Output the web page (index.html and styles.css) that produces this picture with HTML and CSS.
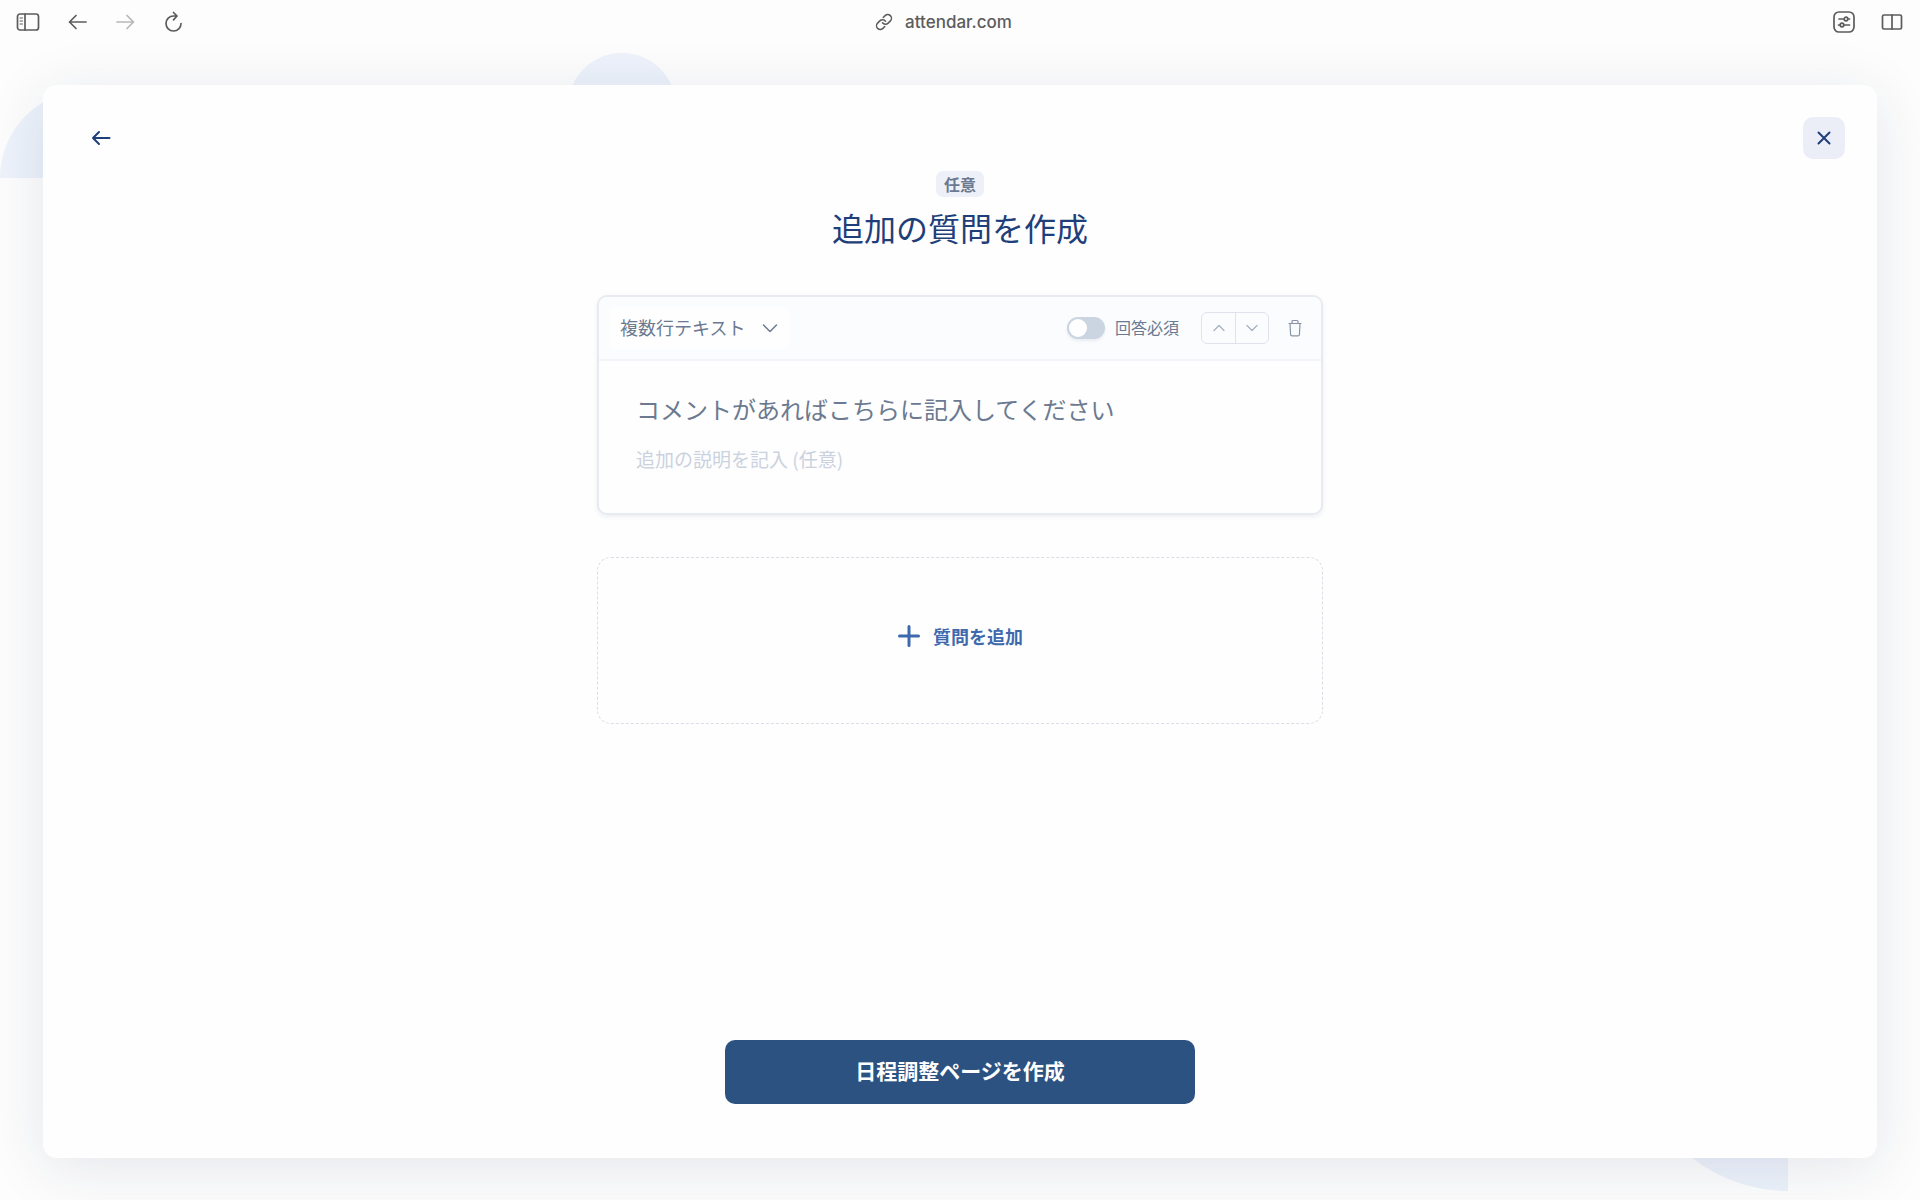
FILE: index.html
```html
<!DOCTYPE html>
<html lang="ja">
<head>
  <meta charset="UTF-8">
  <title>追加の質問を作成</title>
  <link rel="stylesheet" href="styles.css">
</head>
<body>
  <header class="toolbar">
    <div class="tools">
      <button class="tool" aria-label="サイドバー">
        <svg width="24" height="20" viewBox="0 0 24 20"><rect x="1.5" y="2" width="21" height="16" rx="2.5"/><path d="M9 2v16"/><path class="thin" d="M4 6h2.500M4 9h2.500M4 12h2.500"/></svg>
      </button>
      <button class="tool" aria-label="戻る">
        <svg width="20" height="20" viewBox="0 0 20 20"><path d="M18 10H1.500M8 3.500L1.500 10 8 16.500"/></svg>
      </button>
      <button class="tool" aria-label="進む" disabled>
        <svg width="20" height="20" viewBox="0 0 20 20"><path d="M1 10h16.500M11 3.500l6.500 6.500-6.500 6.500"/></svg>
      </button>
      <button class="tool" aria-label="再読み込み">
        <svg width="20" height="22" viewBox="0 0 20 22"><path d="M17 12.500a7.500 7.500 0 1 1-7.500-7.500H13M9.500 1.500L13 5 9.500 8.800"/></svg>
      </button>
    </div>
    <div class="address">
      <svg width="18" height="18" viewBox="0 0 24 24"><path d="M10 13a5 5 0 0 0 7.540.540l3-3a5 5 0 0 0-7.070-7.070l-2.500 2.500"/><path d="M14 11a5 5 0 0 0-7.540-.540l-3 3a5 5 0 0 0 7.070 7.070l2.500-2.500"/></svg>
      <span>attendar.com</span>
    </div>
    <div class="tools tools-end">
      <button class="tool" aria-label="ページ設定">
        <svg width="22" height="22" viewBox="0 0 22 22"><rect x="1" y="1" width="20" height="20" rx="5"/><path d="M6 8h5M15 8h1.500M5.500 14H7M11 14h5.500"/><circle cx="13" cy="8" r="1.800"/><circle cx="9" cy="14" r="1.800"/></svg>
      </button>
      <button class="tool" aria-label="分割表示">
        <svg width="22" height="20" viewBox="0 0 22 20"><rect x="1.500" y="3" width="19" height="14" rx="1.500"/><path d="M11 3v14"/></svg>
      </button>
    </div>
  </header>

  <main class="stage">
    <div class="shape shape-left"></div>
    <div class="shape shape-top"></div>
    <div class="shape shape-bottom"></div>

    <section class="modal">
      <div class="modal-nav">
        <button class="icon-button" aria-label="前の画面">
          <svg width="20" height="20" viewBox="0 0 20 20"><path d="M18.500 10H2M8 4l-6 6 6 6"/></svg>
        </button>
        <button class="icon-button close" aria-label="閉じる">
          <svg width="20" height="20" viewBox="0 0 20 20"><path d="M4.500 4.500l11 11M15.500 4.500l-11 11"/></svg>
        </button>
      </div>

      <div class="content">
        <span class="badge">任意</span>
        <h1>追加の質問を作成</h1>

        <article class="question">
          <div class="question-bar">
            <div class="type">
              <select aria-label="回答形式">
                <option>複数行テキスト</option>
                <option>一行テキスト</option>
              </select>
              <svg width="16" height="16" viewBox="0 0 16 16"><path d="M1.500 5L8 11.500 14.500 5"/></svg>
            </div>
            <label class="required"><input type="checkbox" role="switch"><span>回答必須</span></label>
            <div class="order">
              <button aria-label="上へ移動"><svg width="12" height="12" viewBox="0 0 12 12"><path d="M1 8.500l5-5 5 5"/></svg></button>
              <button aria-label="下へ移動"><svg width="12" height="12" viewBox="0 0 12 12"><path d="M1 3.500l5 5 5-5"/></svg></button>
            </div>
            <button class="delete" aria-label="質問を削除">
              <svg width="16" height="18" viewBox="0 0 16 18"><path d="M2 4.500h12M5 4.500V2.500a1 1 0 0 1 1-1h4a1 1 0 0 1 1 1v2M3 4.500l.6 11a1.500 1.500 0 0 0 1.500 1.400h5.800a1.500 1.500 0 0 0 1.500-1.400l.6-11"/></svg>
            </button>
          </div>
          <div class="question-body">
            <input class="title" type="text" aria-label="質問" value="コメントがあればこちらに記入してください">
            <input class="note" type="text" aria-label="追加の説明" placeholder="追加の説明を記入 (任意)">
          </div>
        </article>

        <button class="add">
          <svg width="24" height="24" viewBox="0 0 24 24"><path d="M12 2.500v19M2.500 12h19"/></svg>
          質問を追加
        </button>
      </div>

      <button class="submit">日程調整ページを作成</button>
    </section>
  </main>
</body>
</html>
```
FILE: styles.css
```css
* {
  box-sizing: border-box;
}

body {
  display: flex;
  flex-direction: column;
  min-height: 100vh;
  margin: 0;
  background: #fdfdfd;
  color: #6b7a90;
  font-family: "Noto Sans CJK JP", sans-serif;
}

button,
input,
select {
  margin: 0;
  padding: 0;
  border: none;
  background: none;
  color: inherit;
  font: inherit;
}

button {
  display: flex;
  align-items: center;
  justify-content: center;
  cursor: pointer;
}

svg {
  display: block;
  fill: none;
  stroke: currentColor;
  stroke-width: 1.5;
  stroke-linecap: round;
  stroke-linejoin: round;
}

/* Browser bar */
.toolbar {
  display: grid;
  grid-template-columns: 1fr auto 1fr;
  align-items: center;
  height: 43px;
  padding: 0 17px 0 16px;
  background: #fdfdfd;
  color: #5c5c5c;
}

.tools {
  display: flex;
  align-items: center;
  gap: 28px;
}

.tool svg {
  stroke-width: 1.7;
}

.tools-end {
  justify-content: flex-end;
  gap: 26px;
}

.tool:disabled {
  color: #b8b8b8;
}

.tool .thin {
  stroke-width: 1;
}

.address {
  display: flex;
  align-items: center;
  gap: 12px;
  padding-right: 32px;
  font: 500 17px Inter, sans-serif;
}

.address svg {
  stroke-width: 2;
}

/* Background and dialog */
.stage {
  position: relative;
  display: flex;
  flex: 1;
  padding: 42px 43px;
  overflow: hidden;
}

.shape {
  position: absolute;
  background: #edf2fb;
}

.shape-left {
  top: 47px;
  left: 0;
  width: 88px;
  height: 88px;
  border-radius: 88px 0 0 0;
}

.shape-top {
  top: 10px;
  left: 568px;
  width: 108px;
  height: 108px;
  border-radius: 50%;
}

.shape-bottom {
  right: 132px;
  bottom: 9px;
  width: 155px;
  height: 155px;
  border-radius: 0 0 0 155px;
}

.modal {
  position: relative;
  display: flex;
  flex: 1;
  flex-direction: column;
  align-items: center;
  padding-bottom: 54px;
  border-radius: 14px;
  background: #fefefe;
  box-shadow: 0 10px 60px rgba(30, 50, 80, 0.11);
}

.modal-nav {
  display: flex;
  justify-content: space-between;
  width: 100%;
  padding: 32px 32px 0 37px;
}

.icon-button {
  width: 42px;
  height: 42px;
  border-radius: 10px;
  color: #1e3f7a;
}

.icon-button svg {
  stroke-width: 2;
}

.close {
  background: #ebeef7;
}

.content {
  display: flex;
  flex: 1;
  flex-direction: column;
  align-items: center;
  width: 100%;
  max-width: 726px;
  padding-top: 12px;
}

.badge {
  padding: 0 8px;
  border-radius: 7px;
  background: #edf0f8;
  font-size: 16px;
  font-weight: 700;
  line-height: 26px;
}

h1 {
  margin: 8px 0 46px;
  color: #1e3f7a;
  font-size: 32px;
  font-weight: 400;
  line-height: 44px;
}

/* Question card */
.question {
  width: 100%;
  border: 2px solid #e7ebf1;
  border-radius: 10px;
  box-shadow: 0 2px 4px rgba(100, 120, 150, 0.12);
}

.question-bar {
  display: flex;
  align-items: center;
  height: 64px;
  padding: 0 18px 0 10px;
  border-bottom: 2px solid #f1f4f8;
  border-radius: 8px 8px 0 0;
  background: #fbfcfe;
}

.type {
  display: grid;
  align-items: center;
  margin-right: auto;
  border-radius: 6px;
  background: #fefefe;
}

.type select,
.type svg {
  grid-area: 1 / 1;
}

.type select {
  height: 42px;
  padding: 0 44px 2px 11px;
  appearance: none;
  font-size: 18px;
}

.type svg {
  justify-self: end;
  margin-right: 12px;
  pointer-events: none;
}

.required {
  display: flex;
  align-items: center;
  gap: 10px;
  font-size: 16px;
}

.required span {
  padding-bottom: 2px;
}

.required input {
  display: flex;
  align-items: center;
  width: 38px;
  height: 22px;
  padding: 0 2px;
  border-radius: 11px;
  background: #cbd5e1;
  appearance: none;
  box-shadow: 0 2px 3px rgba(100, 120, 150, 0.12);
}

.required input::before {
  width: 18px;
  height: 18px;
  border-radius: 50%;
  background: #fff;
  content: "";
}

.required input:checked {
  justify-content: flex-end;
  background: #2c5282;
}

.order {
  display: flex;
  margin: 0 18px 0 22px;
  border: 1px solid #dfe4ec;
  border-radius: 6px;
}

.order button {
  width: 33px;
  height: 30px;
  color: #a3afc0;
}

.order button + button {
  border-left: 1px solid #dfe4ec;
}

.order svg,
.delete svg {
  stroke-width: 1.2;
}

.delete {
  color: #8794a8;
}

.question-body {
  display: flex;
  flex-direction: column;
  padding: 27px 37px 39px;
}

.title {
  height: 40px;
  font-size: 24px;
}

.note {
  height: 32px;
  margin-top: 14px;
  font-size: 19px;
}

.note::placeholder {
  color: #cbd2df;
}

.add {
  gap: 12px;
  width: 100%;
  height: 167px;
  margin-top: 42px;
  padding-bottom: 10px;
  border: 1px dashed #d9dee6;
  border-radius: 14px;
  color: #3e6aad;
  font-size: 18px;
  font-weight: 700;
}

.add svg {
  stroke-width: 3;
}

.submit {
  width: 470px;
  height: 64px;
  padding-bottom: 4px;
  border-radius: 10px;
  background: #2c5282;
  color: #fff;
  font-size: 21px;
  font-weight: 700;
}
```
